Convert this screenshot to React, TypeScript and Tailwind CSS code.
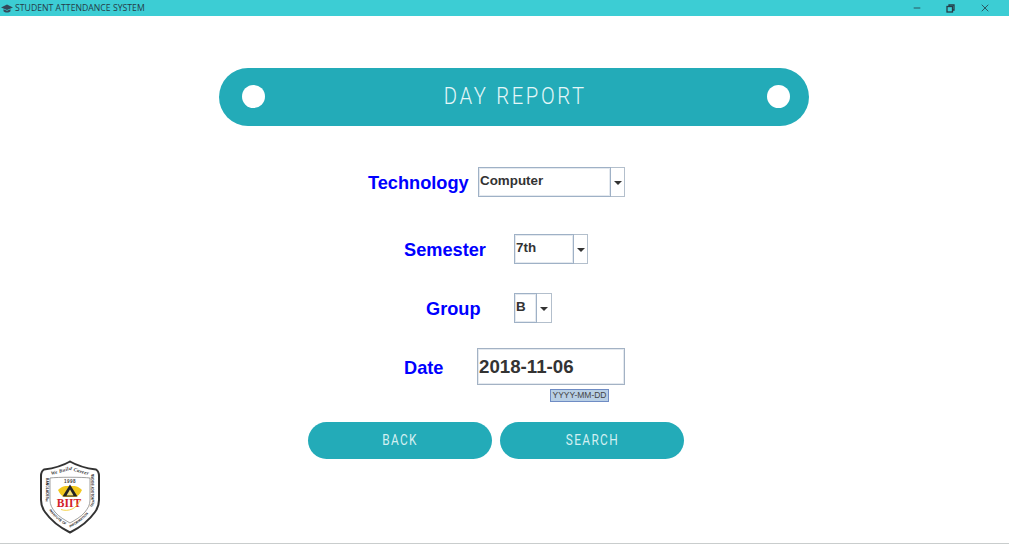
import { Minus, X } from "lucide-react";

function Logo() {
  const bandFont = "'Liberation Sans', sans-serif";
  return (
    <svg width="62" height="74" viewBox="0 0 62 74" className="block">
      <defs>
        <path id="bandLeft" d="M6.5 18 L6.5 40 C6.5 43 7.5 45 9 47.5" />
        <path id="bandLowLeft" d="M10 50 C15 58 23 63.5 31 67.5" />
        <path id="bandLowRight" d="M31 67.5 C39 63.5 47 58 52 50" />
        <path id="bandRight" d="M52.5 47.5 C54.5 45 55.5 43 55.5 40 L55.5 14" />
        <path id="top" d="M6 16 C18 14.5 26 11 31 10 C36 11 44 14.5 56 16" />
      </defs>
      <path d="M31 1.5 C25 5 17 8 5 9.5 C2.5 11 2 13 2 16 L2 40 C2 45 3 48 6 52 C13 62 22 68 31 72.5 C40 68 49 62 56 52 C59 48 60 45 60 40 L60 16 C60 13 59.5 11 57 9.5 C45 8 37 5 31 1.5 Z" fill="#fff" stroke="#333" strokeWidth="2" />
      <path d="M11 18 C18 17 44 17 51 18 L51 40 C51 45 49 48 46 52 C42 57 36 60 31 63 C26 60 20 57 16 52 C13 48 11 45 11 40 Z" fill="#fff" stroke="#777" strokeWidth="0.7" />
      <text fontSize="5" fontStyle="italic" fontWeight="700" letterSpacing="0.3" fill="#333" fontFamily="'Liberation Serif', serif">
        <textPath href="#top" startOffset="50%" textAnchor="middle">We Build Career</textPath>
      </text>
      <text fontSize="3.3" fontWeight="700" fill="#222" fontFamily={bandFont}>
        <textPath href="#bandLeft">BANGLADESH</textPath>
      </text>
      <text fontSize="3.3" fontWeight="700" fill="#222" fontFamily={bandFont}>
        <textPath href="#bandLowLeft">INSTITUTE OF</textPath>
      </text>
      <text fontSize="3.3" fontWeight="700" fill="#222" fontFamily={bandFont}>
        <textPath href="#bandLowRight">INFORMATION</textPath>
      </text>
      <text fontSize="3.1" fontWeight="700" fill="#222" fontFamily={bandFont}>
        <textPath href="#bandRight">TECHNOLOGY BOGRA</textPath>
      </text>
      <text x="31" y="23" textAnchor="middle" fontSize="4.6" fontWeight="700" letterSpacing="0.4" fill="#444" fontFamily={bandFont}>1998</text>
      <path d="M19 30 C23 26 26 26 28 26 L34 26 C36 26 39 26 43 30 C41 34 39 36 37 37 L25 37 C23 36 21 34 19 30 Z" fill="#f2c81e" />
      <path d="M31 24.5 L38.5 36.5 L23.5 36.5 Z" fill="#222" />
      <path d="M31 29.5 L34.5 35.5 L27.5 35.5 Z" fill="#f6e27a" />
      <text x="30" y="47" textAnchor="middle" fontSize="11.5" fontWeight="700" fill="#d2232a" fontFamily="'Liberation Serif', serif">BIIT</text>
      <path d="M22 49.5 C29 52 38 49 41 40" fill="none" stroke="#f2c81e" strokeWidth="0.8" />
    </svg>
  );
}

function Select({ value, width, boxWidth }: { value: string; width: string; boxWidth: string }) {
  return (
    <div className={`flex h-[30px] ${width} bg-white`}>
      <div className={`${boxWidth} border border-[#9fb1c6] pl-[1px] pt-[4px] text-[13.4px] leading-[18px] font-bold text-[#333333] shadow-[inset_0_0_0_1px_#e4e9ef]`}>{value}</div>
      <div className="flex flex-1 items-center justify-center border-y border-r border-[#b3bfcc]">
        <div className="mt-[1px] h-0 w-0 border-x-[4px] border-t-[4px] border-x-transparent border-t-[#333333]" />
      </div>
    </div>
  );
}

function PillButton({ label }: { label: string }) {
  return (
    <button className="flex h-[37px] w-[184px] items-center justify-center rounded-[19px] bg-[#23abb8] text-[14px] text-[#d4f0f2] font-['Roboto',sans-serif]">
      <span className="inline-block scale-x-[0.85] tracking-[1.6px]">{label}</span>
    </button>
  );
}

export default function App() {
  return (
    <div className="flex h-[544px] w-[1009px] flex-col overflow-hidden bg-white font-['Liberation_Sans',sans-serif]">
      <div className="flex h-[16px] shrink-0 items-center bg-[#3ccdd4] pl-[1px] text-[#263c48]">
        <svg width="12" height="9" viewBox="0 0 12 9" className="mr-[2px]">
          <path d="M6 0.5 L12 3.5 L6 6 L0 3.5 Z M2.5 5.2 L6 6.8 L9.5 5.2 V7.2 C8 9 4 9 2.5 7.2 Z" fill="#33495a" />
        </svg>
        <span className="text-[8.7px] leading-none font-['Open_Sans',sans-serif]">STUDENT ATTENDANCE SYSTEM</span>
        <div className="ml-auto flex items-center gap-[24px] pr-[18px]">
          <Minus size={10} strokeWidth={2} />
          <svg width="9" height="9" viewBox="0 0 9 9" fill="none" stroke="#263c48" strokeWidth="1.3">
            <rect x="1" y="2.5" width="5.5" height="5.5" />
            <path d="M3 2.5 V1 H8 V6 H6.5" />
          </svg>
          <X size={12} strokeWidth={1.6} />
        </div>
      </div>

      <div className="relative flex-1 border-b border-[#c9cdcd]">
        <div className="ml-[219px] mt-[52px] flex h-[58px] w-[590px] items-center justify-between rounded-[29px] bg-[#23abb8] pl-[23px] pr-[19px]">
          <div className="mb-[1px] h-[23px] w-[23px] rounded-full bg-white" />
          <span className="mr-[2px] inline-block scale-x-[0.88] text-[23px] font-light tracking-[3px] text-[#e4f7f8] font-['Roboto',sans-serif]">DAY REPORT</span>
          <div className="mb-[1px] h-[23px] w-[23px] rounded-full bg-white" />
        </div>

        <div className="ml-[368px] mt-[41px] flex items-center">
          <span className="w-[110px] pt-[2px] text-[18.2px] leading-[24px] font-bold text-[#0000ff]">Technology</span>
          <Select value="Computer" width="w-[147px]" boxWidth="w-[133px]" />
        </div>

        <div className="ml-[404px] mt-[37px] flex items-center">
          <span className="w-[110px] pt-[2px] text-[18.2px] leading-[24px] font-bold text-[#0000ff]">Semester</span>
          <Select value="7th" width="w-[74px]" boxWidth="w-[60px]" />
        </div>

        <div className="ml-[426px] mt-[29px] flex items-center">
          <span className="w-[88px] pt-[2px] text-[18.2px] leading-[24px] font-bold text-[#0000ff]">Group</span>
          <Select value="B" width="w-[38px]" boxWidth="w-[23px]" />
        </div>

        <div className="ml-[404px] mt-[25px] flex items-center">
          <span className="w-[73px] pt-[3px] text-[18.2px] leading-[24px] font-bold text-[#0000ff]">Date</span>
          <div className="flex h-[37px] w-[148px] items-center border border-[#a3b2c4] pl-[1px] pt-[2px] text-[18.7px] font-bold text-[#333333] shadow-[inset_0_0_0_1px_#e4e9ef]">2018-11-06</div>
        </div>

        <div className="ml-[550px] mt-[4px] flex h-[13px] w-[59px] items-center justify-center border border-[#6f8cc4] bg-[#b8cfe5] text-[8.5px] text-[#444444]">YYYY-MM-DD</div>

        <div className="ml-[308px] mt-[20px] flex gap-[8px]">
          <PillButton label="BACK" />
          <PillButton label="SEARCH" />
        </div>

        <div className="absolute left-[39px] top-[444px]">
          <Logo />
        </div>
      </div>
    </div>
  );
}
